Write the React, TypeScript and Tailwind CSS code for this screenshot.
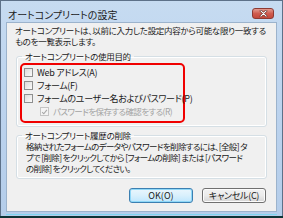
import React from "react";

const jp = "font-['Noto_Sans_CJK_JP','Noto_Sans',sans-serif] [font-feature-settings:'palt']";
const body = "text-[8.5px] leading-[11px] tracking-[-0.3px]";

function Check({ checked, disabled }: { checked?: boolean; disabled?: boolean }) {
  return (
    <span
      className={`relative flex h-[9px] w-[9px] shrink-0 items-center justify-center border ${
        disabled ? "border-[#c4c4c4] bg-[#f4f4f4]" : "border-[#8e8f8f] bg-gradient-to-br from-[#dcdcdc] to-[#fbfbfb]"
      }`}
    >
      {checked && (
        <svg viewBox="0 0 9 9" className="h-[8px] w-[8px]">
          <path d="M1.5 4.6 L3.6 6.8 L7.6 1.8" fill="none" stroke={disabled ? "#a8a8a8" : "#3a3a3a"} strokeWidth="1.4" />
        </svg>
      )}
    </span>
  );
}

function Row({ label, indent, checked, disabled }: { label: string; indent?: boolean; checked?: boolean; disabled?: boolean }) {
  return (
    <div className={`flex h-[13px] items-center gap-[4px] ${indent ? "ml-[18px]" : "ml-[2px]"}`}>
      <Check checked={checked} disabled={disabled} />
      <span
        className={`whitespace-nowrap leading-[11px] ${
          disabled ? "text-[8.5px] tracking-[-0.6px] text-[#a3a3a3]" : "text-[9px] tracking-[-0.3px] text-[#1a1a1a]"
        }`}
      >
        {label}
      </span>
    </div>
  );
}

export default function App() {
  return (
    <div className={`${jp} relative h-[218px] w-[283px] overflow-hidden bg-[#0d3436]`}>
      <div className="flex h-[216px] w-[283px] flex-col border border-b-0 border-[#5d7189] bg-gradient-to-b from-[#c6dbf1] via-[#bcd3ee] to-[#b4cdea] px-[5px]">
        {/* Title bar */}
        <div className="flex h-[21px] items-center justify-between pl-[2px]">
          <span className="mt-[6px] text-[10px] leading-[12px] text-[#1b1b1b]">オートコンプリートの設定</span>
          <div className="mr-[3px] mt-[4px] flex h-[11px] w-[22px] items-center justify-center rounded-[3px] border border-[#8d3a33] bg-gradient-to-b from-[#e39b91] via-[#cf5c4f] to-[#c3483b]">
            <svg viewBox="0 0 10 8" className="h-[7px] w-[9px]">
              <path d="M2 1 L8 7 M8 1 L2 7" stroke="#5a1d17" strokeWidth="2.6" strokeLinecap="round" />
              <path d="M2 1 L8 7 M8 1 L2 7" stroke="#ffffff" strokeWidth="1.4" strokeLinecap="round" />
            </svg>
          </div>
        </div>

        {/* Client area */}
        <div className="flex h-[190px] flex-col border border-[#9cb3cc] bg-[#f0f0f0] px-[8px] pt-[2px] text-[#1a1a1a]">
          <p className={`whitespace-nowrap ${body}`}>
            オートコンプリートは、以前に入力した設定内容から可能な限り一致する
            <br />
            ものを一覧表示します。
          </p>

          <fieldset className="ml-[1px] mt-[4px] h-[76px] w-[251px] rounded-[3px] border border-[#d5dfe5] px-[3px] shadow-[inset_0_0_0_1px_#ffffff]">
            <legend className={`ml-[2px] px-[3px] ${body}`}>オートコンプリートの使用目的</legend>
            <div className="mt-[1px] h-[60px] w-[165px] rounded-[5px] border-2 border-[#f00000] pt-[1px]">
              <Row label="Web アドレス(A)" />
              <Row label="フォーム(F)" />
              <Row label="フォームのユーザー名およびパスワード(P)" />
              <Row label="パスワードを保存する確認をする(R)" indent checked disabled />
            </div>
          </fieldset>

          <fieldset className="ml-[1px] mt-[3px] h-[49px] w-[251px] rounded-[3px] border border-[#d5dfe5] pl-[9px] shadow-[inset_0_0_0_1px_#ffffff]">
            <legend className={`-ml-[4px] px-[3px] ${body}`}>オートコンプリート履歴の削除</legend>
            <p className="whitespace-nowrap text-[8.5px] leading-[11px] tracking-[-0.65px]">
              格納されたフォームのデータやパスワードを削除するには、[全般] タ
              <br />
              ブで [削除] をクリックしてから [フォームの削除] または [パスワード
              <br />
              の削除] をクリックしてください。
            </p>
          </fieldset>

          <div className="mt-[9px] flex justify-end gap-[9px] pr-[2px]">
            <button className="flex h-[15px] w-[64px] items-center justify-center rounded-[3px] border border-[#3c7fb1] bg-gradient-to-b from-[#eaf6fd] via-[#d9f0fc] to-[#bee6fd] text-[9px] leading-[11px] text-[#1a1a1a] shadow-[inset_0_0_0_1px_#8fd8f8]">
              OK(O)
            </button>
            <button className="flex h-[15px] w-[64px] items-center justify-center rounded-[3px] border border-[#707070] bg-gradient-to-b from-[#f2f2f2] via-[#ebebeb] to-[#d4d4d4] text-[9px] leading-[11px] tracking-[-0.3px] text-[#1a1a1a] shadow-[inset_0_0_0_1px_#fcfcfc]">
              キャンセル(C)
            </button>
          </div>
        </div>
        <div className="h-[3px] border-b border-[#7fd6f0]" />
      </div>
    </div>
  );
}
